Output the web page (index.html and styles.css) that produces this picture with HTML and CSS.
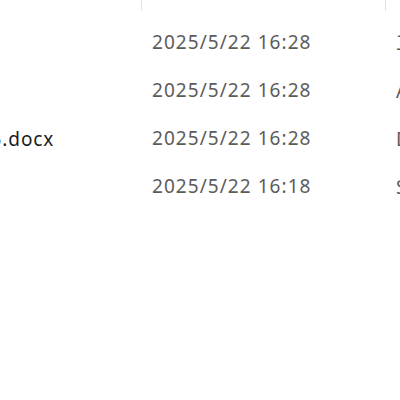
FILE: index.html
```html
<!DOCTYPE html>
<html lang="zh-CN">
<head>
<meta charset="utf-8">
<title>文件列表</title>
<link rel="stylesheet" href="styles.css">
</head>
<body>
<div class="view">
  <div class="list">
    <div class="header">
      <div class="hcell name"></div>
      <div class="hcell date"></div>
      <div class="hcell type"></div>
    </div>
    <div class="rows">
      <div class="row">
        <div class="cell name">清单</div>
        <div class="cell date">2025/5/22 16:28</div>
        <div class="cell type">工作表</div>
      </div>
      <div class="row">
        <div class="cell name">手册</div>
        <div class="cell date">2025/5/22 16:28</div>
        <div class="cell type">Adobe Acrobat 文档</div>
      </div>
      <div class="row">
        <div class="cell name">项目报告5.docx</div>
        <div class="cell date">2025/5/22 16:28</div>
        <div class="cell type">DOCX 文档</div>
      </div>
      <div class="row">
        <div class="cell name">草图</div>
        <div class="cell date">2025/5/22 16:18</div>
        <div class="cell type">SVG 文档</div>
      </div>
    </div>
  </div>
</div>
</body>
</html>
```

FILE: styles.css
```css
html, body {
  margin: 0;
  padding: 0;
  background: #ffffff;
}
.view {
  width: 400px;
  height: 400px;
  overflow: hidden;
  font-family: "Noto Sans", "Noto Sans CJK SC", sans-serif;
}
.list {
  margin-left: -100px;
  width: 700px;
}
.header {
  display: flex;
  height: 11px;
}
.hcell {
  box-sizing: border-box;
  border-right: 1px solid #e3e3e3;
  height: 11px;
}
.hcell.name { width: 242px; }
.hcell.date { width: 244px; }
.hcell.type { flex: 1; border-right: none; }
.rows {
  padding-top: 7px;
}
.row {
  display: flex;
  height: 48px;
  align-items: center;
  font-size: 19px;
}
.cell {
  box-sizing: border-box;
  white-space: nowrap;
  overflow: hidden;
}
.cell.name {
  width: 242px;
  color: #1a1a1a;
  padding-left: 11px;
  letter-spacing: 0.9px;
}
.cell.date {
  width: 244px;
  padding-left: 10px;
  color: #5c5c5c;
  letter-spacing: 1.05px;
}
.cell.type {
  flex: 1;
  padding-left: 10px;
  color: #5c5c5c;
}
```
